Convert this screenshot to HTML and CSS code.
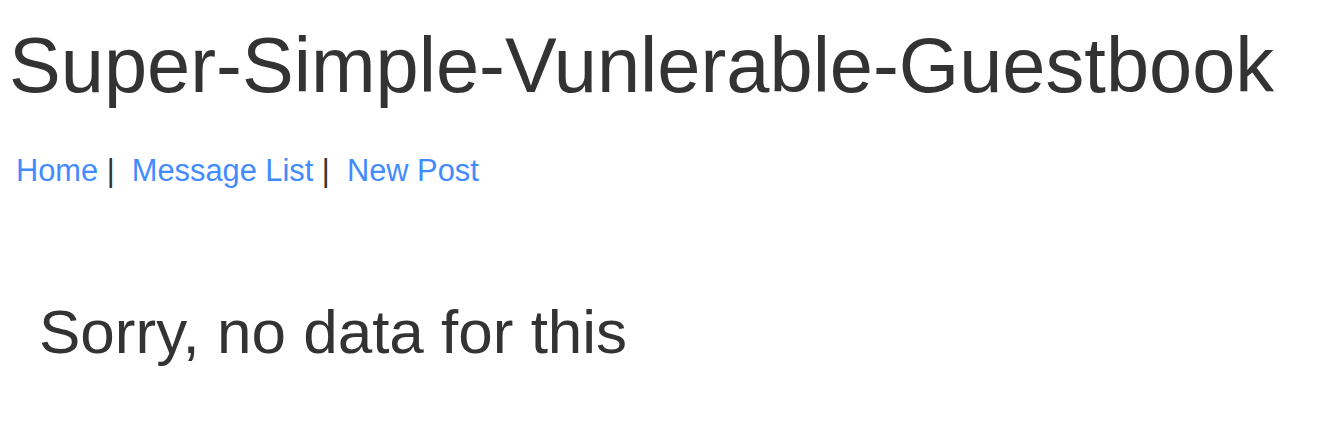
FILE: index.html
```html
<!DOCTYPE html>
<html>
<head>
<meta charset="utf-8">
<link rel="stylesheet" href="styles.css">
</head>
<body>
<h1 class="title">Super-Simple-Vunlerable-Guestbook</h1>
<nav class="nav"><a href="#">Home</a> |&nbsp; <a href="#">Message List</a> |&nbsp; <a href="#">New Post</a></nav>
<h2 class="msg">Sorry, no data for this</h2>
</body>
</html>
```
FILE: styles.css
```css
html, body {
  margin: 0;
  padding: 0;
  background: #fff;
}
body {
  font-family: "Liberation Sans", Arial, sans-serif;
  color: #333;
}
.title {
  margin: 23px 0 0 9px;
  font-size: 77.6px;
  font-weight: normal;
  line-height: 1.1;
}
.nav {
  margin: 41px 0 0 16px;
  font-size: 30.8px;
  line-height: 1.4;
}
.nav a {
  color: #428bff;
  text-decoration: none;
}
.msg {
  margin: 106px 0 0 39px;
  font-size: 62px;
  font-weight: normal;
  line-height: 1.1;
}
```
